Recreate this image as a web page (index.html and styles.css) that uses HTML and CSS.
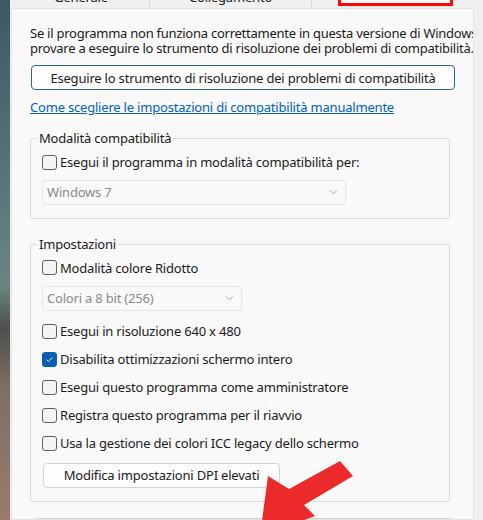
FILE: index.html
```html
<!DOCTYPE html>
<html>
<head>
  <meta charset="utf-8">
  <title>Proprietà - Compatibilità</title>
  <link rel="stylesheet" href="styles.css">
</head>
<body>
  <div class="desk"></div>
  <div class="window">
    <div class="tabs">
      <div class="tab tab-general">Generale</div>
      <div class="tab tab-link">Collegamento</div>
      <div class="tab tab-active">Compatibilità</div>
    </div>

    <div class="panel">
      <p class="intro">Se il programma non funziona correttamente in questa versione di Windows,<br>provare a eseguire lo strumento di risoluzione dei problemi di compatibilità.</p>
      <button class="btn btn-wide">Eseguire lo strumento di risoluzione dei problemi di compatibilità</button>
      <a class="link" href="#">Come scegliere le impostazioni di compatibilità manualmente</a>

      <fieldset class="group group-mode">
        <legend>Modalità compatibilità</legend>
        <label class="check first"><span class="box"></span>Esegui il programma in modalità compatibilità per:</label>
        <div class="select select-os">
          <span>Windows 7</span>
          <svg class="chev" viewBox="0 0 10 6"><path d="M1 1l4 4 4-4" fill="none" stroke="#a0a0a0" stroke-width="1"/></svg>
        </div>
      </fieldset>

      <fieldset class="group group-settings">
        <legend>Impostazioni</legend>
        <label class="check first"><span class="box"></span>Modalità colore Ridotto</label>
        <div class="select select-color">
          <span>Colori a 8 bit (256)</span>
          <svg class="chev" viewBox="0 0 10 6"><path d="M1 1l4 4 4-4" fill="none" stroke="#a0a0a0" stroke-width="1"/></svg>
        </div>
        <label class="check after-select"><span class="box"></span>Esegui in risoluzione 640 x 480</label>
        <label class="check"><span class="box checked"><svg viewBox="0 0 16 16"><path d="M4.5 8.2l2.3 2.3 4.7-4.8" fill="none" stroke="#fff" stroke-width="1.2"/></svg></span>Disabilita ottimizzazioni schermo intero</label>
        <label class="check"><span class="box"></span>Esegui questo programma come amministratore</label>
        <label class="check"><span class="box"></span>Registra questo programma per il riavvio</label>
        <label class="check"><span class="box"></span>Usa la gestione dei colori ICC legacy dello schermo</label>
        <button class="btn btn-dpi">Modifica impostazioni DPI elevati</button>
      </fieldset>

      <button class="btn btn-all">Modifica impostazioni per tutti gli utenti</button>
    </div>
  </div>

  <!-- red arrow drawn over the screenshot -->
  <svg class="arrow" viewBox="0 0 483 520" width="483" height="520">
    <polygon points="340,461 353,476 304,505 315,516 260,536 268,476 289,489" fill="#ec2a2b"/>
  </svg>
</body>
</html>
```

FILE: styles.css
```css
html, body {
  margin: 0;
  height: 520px;
  overflow: hidden;
}
body {
  display: flex;
  position: relative;
  font-family: "Noto Sans", "Open Sans", sans-serif;
  font-size: 13px;
  letter-spacing: -0.2px;
  color: #1b1b1b;
  background: #f0f0f0;
}

/* DESKTOP STRIP ON THE LEFT */
.desk {
  width: 10px;
  flex: none;
  background: linear-gradient(#3d5865, #547175 30%, #6b8583 55%, #4f4f4c 63%, #7d6f66 75%, #9b7b6c 100%);
}

/* WINDOW */
.window {
  flex: 1;
  display: flex;
  flex-direction: column;
  padding: 0 10px 0 1px;
  background: #f0f0f0;
}

/* TABS (ONLY THE BOTTOM EDGE IS VISIBLE) */
.tabs {
  height: 8px;
  display: flex;
  align-items: flex-end;
  overflow: hidden;
  padding-left: 2px;
}
.tab {
  height: 24px;
  box-sizing: border-box;
  padding-top: 6px;
  line-height: 15px;
  text-align: center;
  background: #f0f0f0;
  border-right: 1px solid #dadada;
}
.tab-general {
  width: 137px;
}
.tab-link {
  width: 162px;
}
.tab-active {
  width: 115px;
  margin-left: 26px;
  height: 30px;
  margin-bottom: 2px;
  background: #fbfbfb;
  border: 3px solid #ff0a0a;
  color: #1b1b1b;
}

/* TAB PAGE */
.panel {
  flex: 1;
  background: #f9f9f9;
  border: 1px solid #e3e3e3;
  padding: 0 0 0 18px;
  overflow: hidden;
}

.intro {
  margin: 17px 0 0;
  line-height: 15px;
  white-space: nowrap;
  overflow: hidden;
  width: 443px;
  letter-spacing: -0.25px;
}

/* BUTTONS */
.btn {
  display: block;
  height: 25px;
  box-sizing: border-box;
  padding: 0;
  font: inherit;
  letter-spacing: inherit;
  color: #1b1b1b;
  background: #fdfdfd;
  border: 1px solid #d2d2d2;
  border-radius: 4px;
  text-align: center;
}
.btn-wide {
  width: 424px;
  margin: 9px 0 0 1px;
  border-color: #2f6496;
}
.btn-dpi {
  width: 237px;
  margin-top: 9.5px;
  margin-left: 1px;
}
.btn-all {
  width: 420px;
  margin: 16px 0 0 3px;
  height: 26px;
}

.link {
  display: block;
  margin-top: 10px;
  line-height: 15px;
  color: #0062be;
  text-decoration: underline;
  width: max-content;
}

/* GROUP BOXES */
.group {
  width: 420px;
  box-sizing: border-box;
  margin: 16px 0 0;
  padding: 0 11px 13px;
  border: 1px solid #dcdcdc;
  border-radius: 2px;
}
.group legend {
  margin-left: -5px;
  padding: 0 2px;
  line-height: 15px;
}
.group-settings {
  margin-top: 18.5px;
  padding-bottom: 13.5px;
}

/* CHECKBOXES */
.check {
  display: flex;
  align-items: center;
  gap: 3px;
  height: 20px;
  margin-top: 8px;
  white-space: nowrap;
}
.check.first {
  margin-top: 6px;
}
.group-settings .check.first {
  margin-top: 5.5px;
}
.check.after-select {
  margin-top: 10.5px;
}
.box {
  width: 15px;
  height: 15px;
  box-sizing: border-box;
  flex: none;
  border: 1px solid #5f5f5f;
  border-radius: 3px;
  background: #f4f4f4;
}
.box.checked {
  background: #0a5fb4;
  border-color: #0a5fb4;
}
.box svg {
  display: block;
  width: 13px;
  height: 13px;
}

/* DISABLED DROPDOWNS */
.select {
  display: flex;
  align-items: center;
  justify-content: space-between;
  box-sizing: border-box;
  height: 25px;
  margin-top: 7.5px;
  padding: 0 7px 0 4px;
  background: #f9f9f9;
  border: 1px solid #e6e6e6;
  border-radius: 3px;
  color: #8a8a8a;
}
.select-os {
  width: 304px;
}
.select-color {
  width: 200px;
  height: 24.5px;
  margin-top: 8.5px;
}
.chev {
  width: 9px;
  height: 6px;
}

/* RED ARROW OVERLAY */
.arrow {
  position: absolute;
  left: 0;
  top: 0;
  pointer-events: none;
}
```
